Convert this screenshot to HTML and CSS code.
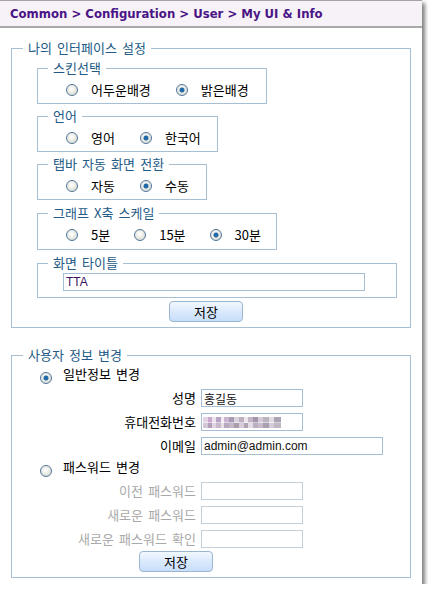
FILE: index.html
```html
<!DOCTYPE html>
<html lang="ko">
<head>
<meta charset="utf-8">
<title>My UI &amp; Info</title>
<link rel="stylesheet" href="styles.css">
</head>
<body>
<div class="page">
  <div class="header">Common &gt; Configuration &gt; User &gt; My UI &amp; Info</div>

  <fieldset class="group group-ui">
    <legend>나의 인터페이스 설정</legend>

    <fieldset class="sub sub-skin">
      <legend>스킨선택</legend>
      <div class="opts">
        <label class="opt"><input type="radio" name="skin"><span>어두운배경</span></label>
        <label class="opt"><input type="radio" name="skin" checked><span>밝은배경</span></label>
      </div>
    </fieldset>

    <fieldset class="sub sub-lang">
      <legend>언어</legend>
      <div class="opts">
        <label class="opt"><input type="radio" name="lang"><span>영어</span></label>
        <label class="opt"><input type="radio" name="lang" checked><span>한국어</span></label>
      </div>
    </fieldset>

    <fieldset class="sub sub-tab">
      <legend>탭바 자동 화면 전환</legend>
      <div class="opts">
        <label class="opt"><input type="radio" name="tab"><span>자동</span></label>
        <label class="opt"><input type="radio" name="tab" checked><span>수동</span></label>
      </div>
    </fieldset>

    <fieldset class="sub sub-graph">
      <legend>그래프 X축 스케일</legend>
      <div class="opts">
        <label class="opt"><input type="radio" name="scale"><span>5분</span></label>
        <label class="opt"><input type="radio" name="scale"><span>15분</span></label>
        <label class="opt"><input type="radio" name="scale" checked><span>30분</span></label>
      </div>
    </fieldset>

    <fieldset class="sub sub-title">
      <legend>화면 타이틀</legend>
      <input class="text title-input" type="text" value="TTA">
    </fieldset>

    <div class="btn-row btn-row-ui"><button class="btn" type="button">저장</button></div>
  </fieldset>

  <fieldset class="group group-user">
    <legend>사용자 정보 변경</legend>

    <label class="radio-row row-general"><input type="radio" name="mode" checked><span>일반정보 변경</span></label>
    <div class="form">
      <span class="flabel">성명</span><input class="text short" type="text" value="홍길동">
      <span class="flabel">휴대전화번호</span><div class="text short fake"><span class="mosaic"></span></div>
      <span class="flabel">이메일</span><input class="text long" type="text" value="admin@admin.com">
    </div>

    <label class="radio-row row-pw"><input type="radio" name="mode"><span>패스워드 변경</span></label>
    <div class="form disabled">
      <span class="flabel">이전 패스워드</span><input class="text short" type="password" disabled>
      <span class="flabel">새로운 패스워드</span><input class="text short" type="password" disabled>
      <span class="flabel">새로운 패스워드 확인</span><input class="text short" type="password" disabled>
    </div>

    <div class="btn-row btn-row-user"><button class="btn" type="button">저장</button></div>
  </fieldset>
</div>
</body>
</html>
```
FILE: styles.css
```css
* { box-sizing: border-box; }

body {
  margin: 0;
  background: #fff;
  font-family: "Noto Sans CJK KR", "Noto Sans", sans-serif;
  font-size: 13px;
  word-spacing: 1.5px;
  color: #000;
}

.page {
  width: 422px;
  height: 584px;
  border-top: 1px solid #a4a4a4;
  box-shadow: 3px 3px 4px rgba(0, 0, 0, 0.5);
  overflow: hidden;
  background: #fff;
}

.header {
  height: 27px;
  background: #f7f2f7;
  border-bottom: 2px solid #a9a9a9;
  padding-left: 10px;
  font-family: "DejaVu Sans Condensed", "DejaVu Sans", sans-serif;
  font-weight: bold;
  font-size: 13px;
  word-spacing: 0;
  line-height: 25px;
  color: #4a1486;
  white-space: nowrap;
}

fieldset {
  margin: 0;
  min-width: 0;
  border: 1px solid #a7bfd4;
}

legend {
  padding: 0 5px;
  line-height: 16px;
  font-size: 13px;
  color: #235a86;
}

.group {
  width: 400px;
  margin-left: 11px;
  padding: 0 0 5px 11px;
}

.group-ui { margin-top: 12px; padding-top: 4px; }
.group-user { margin-top: 19px; }

.sub {
  margin: 4px 0 0 14px;
  padding: 0 0 0 10px;
}
.sub:first-of-type { margin-top: 0; }

.sub-skin { width: 230px; }
.sub-lang { width: 181px; }
.sub-tab { width: 170px; }
.sub-graph { width: 240px; margin-top: 5px; }
.sub-title { width: 360px; margin-top: 5px; }

.opts {
  height: 27px;
  display: flex;
  align-items: center;
  gap: 25px;
  padding-left: 18px;
}
.sub-graph .opts { height: 28px; gap: 24px; }

.opt {
  display: flex;
  align-items: center;
  gap: 13px;
  line-height: 16px;
}

input[type="radio"] {
  -webkit-appearance: none;
  appearance: none;
  flex: none;
  width: 12px;
  height: 12px;
  margin: 0;
  border: 1px solid #4f769c;
  border-radius: 50%;
  background: radial-gradient(circle at 45% 40%, #ffffff 0, #ecece6 45%, #cfd0c8 100%);
}
input[type="radio"]:checked {
  background:
    radial-gradient(circle, #1f6aa8 0 2px, rgba(31, 106, 168, 0.4) 2.6px, transparent 3px),
    radial-gradient(circle at 45% 40%, #ffffff 0, #ecece6 45%, #cfd0c8 100%);
}

.text {
  display: block;
  height: 18px;
  margin: 0;
  padding: 0 2px;
  border: 1px solid #a7bfd4;
  background: #fff;
  font-family: "Liberation Sans", Arial, "Noto Sans CJK KR", sans-serif;
  font-size: 12px;
  word-spacing: 0;
  color: #111;
  outline: none;
}

.title-input {
  width: 302px;
  margin: 2px 0 6px 15px;
  color: #3a1460;
}

.btn-row { display: flex; }
.btn-row-ui { margin-top: 3px; padding-left: 146px; }
.btn-row-user { padding-left: 116px; }

.btn {
  width: 74px;
  height: 21px;
  padding: 0;
  border: 1px solid #9cb6cf;
  border-radius: 4px;
  background: linear-gradient(#f2f8ff 0%, #dcebfc 45%, #c7defa 100%);
  font-family: "Noto Sans CJK KR", sans-serif;
  font-size: 13px;
  line-height: 19px;
  color: #000;
}

.radio-row {
  display: flex;
  align-items: flex-start;
  gap: 11px;
  padding-left: 17px;
  line-height: 16px;
}
.radio-row input { margin-top: 6px; }
.row-general { height: 23px; padding-top: 3px; }
.row-pw { height: 21px; padding-top: 1px; }

.form {
  display: grid;
  grid-template-columns: 173px auto;
  grid-auto-rows: 24px;
  column-gap: 5px;
  align-items: start;
}

.flabel {
  text-align: right;
  line-height: 18px;
  margin-top: 3px;
  white-space: nowrap;
}
.form .text { margin-top: 3px; }

.short { width: 102px; }
.long { width: 182px; }

.fake { padding: 0; }
.mosaic {
  display: block;
  width: 78px;
  height: 11px;
  margin: 3px 0 0 1px;
  background:
    linear-gradient(90deg, #e2d4e4 0 5px, #c8a8cc 5px 9px, #ece4ec 9px 13px, #b8a4c4 13px 18px, #f4eef4 18px 21px, #cbb5d2 21px 26px, #a89cb4 26px 31px, #dcd2dc 31px 36px, #bfb0c0 36px 41px, #ece6ec 41px 45px, #c4b6c8 45px 50px, #a296ac 50px 55px, #d6cad8 55px 60px, #bab2be 60px 66px, #e4dae4 66px 71px, #aca4b4 71px 78px) top / 100% 50% no-repeat,
    linear-gradient(90deg, #d4c8d8 0 5px, #b4a0bc 5px 9px, #e0d4e0 9px 13px, #c8b8cc 13px 18px, #e8e0e8 18px 21px, #b8a8c0 21px 26px, #c4b8c8 26px 31px, #a89cac 31px 36px, #d8ccd8 36px 41px, #b0a4b4 41px 45px, #e4dce4 45px 50px, #bcb0c0 50px 55px, #c8bccc 55px 60px, #a8a0b0 60px 66px, #d4ccd8 66px 71px, #c0b8c4 71px 78px) bottom / 100% 50% no-repeat;
}

.disabled .flabel { color: #a9a9a9; }
.disabled .text { border-color: #c2d0dc; background: #fff; }
```
